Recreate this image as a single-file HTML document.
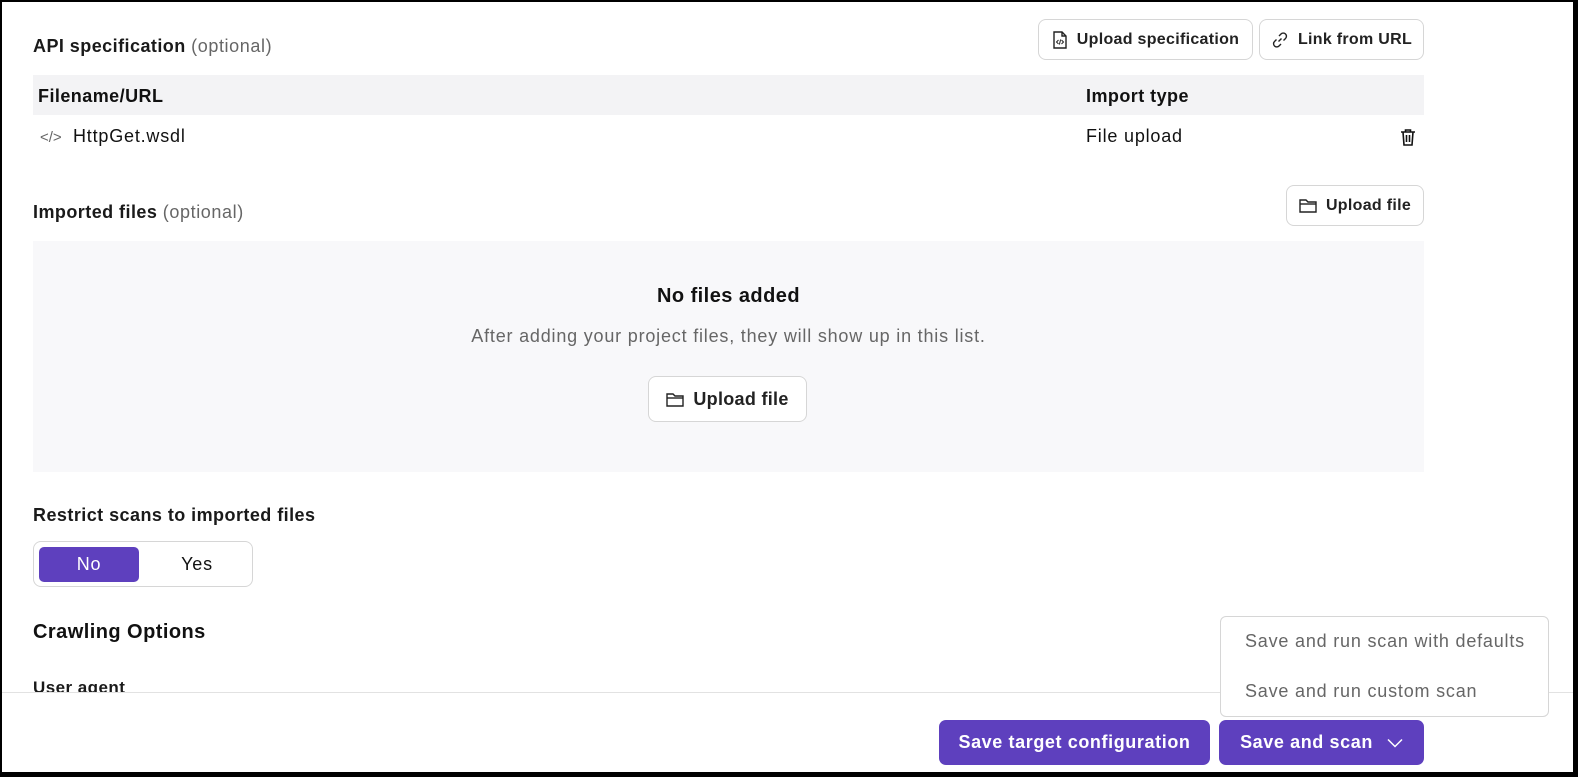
<!DOCTYPE html>
<html><head><meta charset="utf-8"><style>
*{box-sizing:border-box;margin:0;padding:0}
html,body{width:1578px;height:777px;overflow:hidden;background:#000}
.frame{position:absolute;left:2px;top:2px;width:1571px;height:770px;background:#fff;overflow:hidden;font-family:"Liberation Sans",sans-serif;color:#111;letter-spacing:.8px}
.abs{position:absolute}
b,.b{letter-spacing:.45px}
.h{font-size:18px;font-weight:bold;color:#1a1a1a;letter-spacing:.45px}
.opt{font-weight:normal;color:#666;letter-spacing:.6px}
.btn{position:absolute;border:1px solid #d6d6d6;border-radius:8px;background:#fff;font-size:16px;font-weight:bold;color:#222;display:flex;align-items:center;justify-content:center;gap:9px;letter-spacing:.3px}
.pbtn{position:absolute;background:#5e40be;color:#fff;border-radius:7px;font-size:18px;font-weight:bold;display:flex;align-items:center;justify-content:center;gap:14px;letter-spacing:.6px}
</style></head><body><div class="frame">
<div class="abs h" style="left:31px;top:34px">API specification <span class="opt">(optional)</span></div>
<div class="btn" style="left:1036px;top:17px;width:215px;height:41px"><svg width="16" height="18" viewBox="0 0 16 18" fill="none" stroke="#222" stroke-width="1.4"><path d="M2 1h8l4 4v12H2z"/><path d="M10 1v4h4"/><path d="M6.5 9l-2 2 2 2M9.5 9l2 2-2 2M8.6 8.5l-1.2 5" stroke-width="1"/></svg>Upload specification</div>
<div class="btn" style="left:1257px;top:17px;width:165px;height:41px"><svg width="18" height="18" viewBox="0 0 18 18" fill="none" stroke="#222" stroke-width="1.4"><path d="M7.5 10.5l3-3"/><path d="M8 5l2-2a3 3 0 014.5 4.5l-2 2"/><path d="M10 13l-2 2a3 3 0 01-4.5-4.5l2-2"/></svg>Link from URL</div>
<div class="abs" style="left:31px;top:73px;width:1391px;height:40px;background:#f3f3f5"></div>
<div class="abs b" style="left:36px;top:84px;font-size:18px;font-weight:bold">Filename/URL</div>
<div class="abs b" style="left:1084px;top:84px;font-size:18px;font-weight:bold">Import type</div>
<div class="abs" style="left:38px;top:127px;font-size:15px;color:#666;letter-spacing:0">&lt;/&gt;</div>
<div class="abs" style="left:71px;top:124px;font-size:18px">HttpGet.wsdl</div>
<div class="abs" style="left:1084px;top:124px;font-size:18px">File upload</div>
<svg class="abs" style="left:1398px;top:126px" width="16" height="18" viewBox="0 0 16 18" fill="none" stroke="#111" stroke-width="1.6"><path d="M1 4h14M5.5 4V2h5v2M3 4l1 13h8l1-13M6.5 7v7M9.5 7v7"/></svg>
<div class="abs h" style="left:31px;top:200px">Imported files <span class="opt">(optional)</span></div>
<div class="btn" style="left:1284px;top:183px;width:138px;height:41px"><svg width="18" height="15" viewBox="0 0 18 15" fill="none" stroke="#222" stroke-width="1.4"><path d="M1 2h6l2 2h8v10H1z"/><path d="M1 6h16"/></svg>Upload file</div>
<div class="abs" style="left:31px;top:239px;width:1391px;height:231px;background:#f8f8fa"></div>
<div class="abs b" style="left:31px;top:283px;width:1391px;text-align:center;font-size:20px;font-weight:bold">No files added</div>
<div class="abs" style="left:31px;top:324px;width:1391px;text-align:center;font-size:18px;color:#666">After adding your project files, they will show up in this list.</div>
<div class="btn" style="left:646px;top:374px;width:159px;height:46px;font-size:18px"><svg width="18" height="15" viewBox="0 0 18 15" fill="none" stroke="#222" stroke-width="1.4"><path d="M1 2h6l2 2h8v10H1z"/><path d="M1 6h16"/></svg>Upload file</div>
<div class="abs h" style="left:31px;top:503px">Restrict scans to imported files</div>
<div class="abs" style="left:31px;top:539px;width:220px;height:46px;border:1px solid #d6d6d6;border-radius:8px"></div>
<div class="abs" style="left:37px;top:545px;width:100px;height:35px;background:#5e40be;border-radius:5px;color:#fff;font-size:18px;display:flex;align-items:center;justify-content:center">No</div>
<div class="abs" style="left:145px;top:545px;width:100px;height:35px;font-size:18px;display:flex;align-items:center;justify-content:center">Yes</div>
<div class="abs b" style="left:31px;top:619px;font-size:20px;font-weight:bold">Crawling Options</div>
<div class="abs h" style="left:31px;top:676px;font-size:17px">User agent</div>
<div class="abs" style="left:0;top:690px;width:1571px;height:80px;background:#fff;border-top:1px solid #e2e2e2"></div>
<div class="abs" style="left:1218px;top:614px;width:329px;height:101px;background:#fff;border:1px solid #d6d6d6;border-radius:6px"></div>
<div class="abs" style="left:1243px;top:629px;font-size:18px;color:#666">Save and run scan with defaults</div>
<div class="abs" style="left:1243px;top:679px;font-size:18px;color:#666">Save and run custom scan</div>
<div class="pbtn" style="left:937px;top:718px;width:271px;height:45px">Save target configuration</div>
<div class="pbtn" style="left:1217px;top:718px;width:205px;height:45px">Save and scan <svg width="16" height="10" viewBox="0 0 16 10" fill="none" stroke="#fff" stroke-width="1.5"><path d="M1 1.5l7 7 7-7"/></svg></div>
</div></body></html>
